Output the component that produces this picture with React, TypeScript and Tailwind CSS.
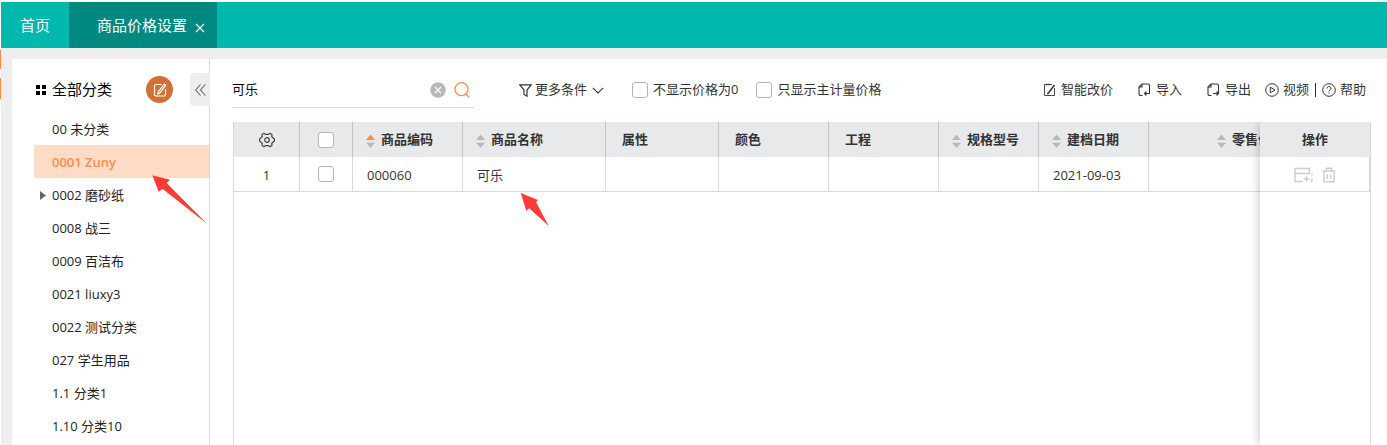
import React, { useState } from 'react';

const categories = [
  { name: '00 未分类' },
  { name: '0001 Zuny' },
  { name: '0002 磨砂纸', hasChildren: true },
  { name: '0008 战三' },
  { name: '0009 百洁布' },
  { name: '0021 liuxy3' },
  { name: '0022 测试分类' },
  { name: '027 学生用品' },
  { name: '1.1 分类1' },
  { name: '1.10 分类10' },
];

const columns = [
  { title: '商品编码', width: 'w-[110px]', sort: 'asc' },
  { title: '商品名称', width: 'w-[143px]', sort: 'none' },
  { title: '属性', width: 'w-[113px]' },
  { title: '颜色', width: 'w-[110px]' },
  { title: '工程', width: 'w-[110px]' },
  { title: '规格型号', width: 'w-[100px]', sort: 'none' },
  { title: '建档日期', width: 'w-[110px]', sort: 'none' },
  { title: '零售价', width: 'w-[135px]', sort: 'none', alignRight: true },
];

const rows = [['000060', '可乐', '', '', '', '', '2021-09-03', '']];

const checkboxClass =
  'block size-4 shrink-0 appearance-none rounded-[3px] border border-[#b4b4b4] bg-white checked:bg-[#ff8c46]';

const SortIcon: React.FC<{ sort?: string }> = ({ sort }) => (
  <svg width="9" height="14" viewBox="0 0 9 14" className="mt-0.5 shrink-0">
    <path d="M4.5 0.5 9 6H0z" fill={sort === 'asc' ? '#ff8c46' : '#b9b9b9'} />
    <path d="M4.5 14 0 8.7h9z" fill="#b9b9b9" />
  </svg>
);

const GearIcon = () => (
  <svg width="16" height="16" viewBox="0 0 16 16" fill="none" stroke="#444" strokeWidth="1.2" strokeLinejoin="round">
    <path d="M5 1.300 6.300 2.400h3.400L11 1.300l2 1.200-.300 2L14.200 6l1.200 1v2l-1.200 1-1.500 1.500.300 2-2 1.200-1.300-1.100H6.300L5 14.700l-2-1.200.300-2L1.800 10 .600 9V7l1.200-1 1.500-1.500-.300-2z" />
    <circle cx="8" cy="8" r="2.300" />
  </svg>
);

const NoteIcon: React.FC<{ size: number }> = ({ size }) => (
  <svg width={size} height={size} viewBox="0 0 14 14" fill="none" stroke="currentColor" strokeWidth="1.2">
    <path d="M8.5 1.5H3a1.5 1.5 0 0 0-1.5 1.5v8.5A1.5 1.5 0 0 0 3 13h8a1.500 1.500 0 0 0 1.500-1.500V6" />
    <path d="m11.300 1.200 1.500 1-6 7.800-2 .9.400-2.100z" />
  </svg>
);

const PriceEditIcon = () => (
  <svg width="13" height="14" viewBox="0 0 13 14" fill="none" stroke="currentColor">
    <path d="M9 1.500H1.500v11h10V5" strokeWidth="0.900" />
    <path d="M11.500 2 5.500 10l-1.300.8" strokeWidth="1.600" />
    <path d="M3.500.500v2M6 .500v2" strokeWidth="0.800" />
  </svg>
);

const TransferIcon: React.FC<{ out?: boolean }> = ({ out }) => (
  <svg width="13" height="14" viewBox="0 0 13 14" fill="none" stroke="currentColor" strokeWidth="1.100">
    <path d="M4.500 12.500H2.500A1.500 1.500 0 0 1 1 11V4l3-3h6a1.500 1.500 0 0 1 1.500 1.500V11" />
    <path d="M4 1v3H1" />
    {out ? <path d="M6 10.500h5.500M9.500 8.500l2 2-2 2" /> : <path d="M11.500 10.500H6.500M8.500 8.500l-2 2 2 2" />}
  </svg>
);

function App() {
  const [active, setActive] = useState('0001 Zuny');
  const [keyword, setKeyword] = useState('可乐');

  return (
    <div className="relative flex h-screen overflow-hidden bg-white pt-0.5 font-['Open_Sans','Noto_Sans_CJK_SC',sans-serif] text-[13px] text-[#333]">
      <div className="flex w-px shrink-0 flex-col pt-12">
        <span className="h-[19px] bg-[#ff8c46]" />
        <span className="mt-[9px] h-[21px] bg-[#ff8c46]" />
      </div>

      <div className="flex min-w-0 flex-1 flex-col bg-[#eee]">
        <header className="flex h-[46px] shrink-0 bg-[#00b8ad] pt-px text-[15px] text-white">
          <a href="#home" className="flex w-[68px] items-center justify-center">首页</a>
          <div className="-mt-px flex w-[148px] items-center bg-[#008980] pl-7 pt-px">
            <a href="#price">商品价格设置</a>
            <button aria-label="关闭" className="ml-2 mt-1">
              <svg width="10" height="10" viewBox="0 0 10 10" stroke="#fff" strokeWidth="1.1">
                <path d="m1 1 8 8M9 1 1 9" />
              </svg>
            </button>
          </div>
        </header>

        <div className="ml-[11px] mt-[11px] flex min-h-0 flex-1 bg-white">
          <aside className="flex w-[198px] shrink-0 flex-col border-r border-[#d9d9d9]">
            <div className="flex h-[53px] shrink-0 items-center pl-6 pt-2 text-black">
              <svg width="10" height="10" viewBox="0 0 10 10">
                <path d="M0 0h4v4H0zM6 0h4v4H6zM0 6h4v4H0zM6 6h4v4H6z" />
              </svg>
              <h2 className="ml-1.5 text-[15px]">全部分类</h2>
              <button
                aria-label="编辑分类"
                className="ml-auto flex size-[27px] items-center justify-center rounded-full bg-[#cf7233] text-white"
              >
                <NoteIcon size={14} />
              </button>
              <button
                aria-label="收起"
                className="-mr-px ml-[17px] flex h-[33px] w-5 items-center justify-center rounded-l bg-[#eee]"
              >
                <svg width="11" height="12" viewBox="0 0 11 12" fill="none" stroke="#666" strokeWidth="1.1">
                  <path d="M5.500.500.700 6l4.800 5.500M10.300.500 5.500 6l4.800 5.500" />
                </svg>
              </button>
            </div>
            <ul className="pl-[22px]">
              {categories.map((item) => (
                <li key={item.name}>
                  <button
                    onClick={() => setActive(item.name)}
                    className={`flex h-[33px] w-full items-center pt-0.5 ${
                      active === item.name ? 'bg-[#ffdcc6] font-semibold text-[#ff8c46]' : 'text-[#222]'
                    }`}
                  >
                    <span className="flex w-[18px] justify-center">
                      {item.hasChildren && (
                        <svg width="6" height="9" viewBox="0 0 6 9">
                          <path d="M0 0l6 4.500L0 9z" fill="#666" />
                        </svg>
                      )}
                    </span>
                    {item.name}
                  </button>
                </li>
              ))}
            </ul>
          </aside>

          <main className="flex min-w-0 flex-1 flex-col pl-[22px] pr-4">
            <div className="flex h-[63px] shrink-0 items-start whitespace-nowrap pr-[5px] pt-3.5">
              <div className="flex h-[35px] w-[242px] shrink-0 items-center border-b border-[#d9d9d9] pr-1">
                <input
                  aria-label="搜索商品"
                  value={keyword}
                  onChange={(e) => setKeyword(e.target.value)}
                  className="min-w-0 flex-1 text-black outline-none"
                />
                <button aria-label="清空" onClick={() => setKeyword('')}>
                  <svg width="16" height="16" viewBox="0 0 16 16">
                    <circle cx="8" cy="8" r="7.700" fill="#b8b8b8" />
                    <path d="m5 5 6 6M11 5l-6 6" stroke="#fff" strokeWidth="1.200" />
                  </svg>
                </button>
                <button aria-label="搜索" className="ml-2">
                  <svg width="16" height="16" viewBox="0 0 16 16" fill="none" stroke="#ff8c46" strokeWidth="1.300">
                    <circle cx="7.500" cy="7.200" r="6.500" />
                    <path d="m11.800 12 3.400 3.400" />
                  </svg>
                </button>
              </div>

              <div className="ml-[45px] flex h-[34px] items-center">
                <button className="flex items-center">
                  <svg width="13" height="13" viewBox="0 0 13 13" fill="none" stroke="#333" strokeWidth="1.200">
                    <path d="M.800.800h11.400L8 6v6.200L5 10.500V6z" />
                  </svg>
                  <span className="ml-[3px]">更多条件</span>
                  <svg width="12" height="7" viewBox="0 0 12 7" fill="none" stroke="#333" strokeWidth="1.100" className="ml-[5px]">
                    <path d="m.800.800 5.200 5.200L11.200.800" />
                  </svg>
                </button>
                <label className="ml-7 flex items-center gap-[5px]">
                  <input type="checkbox" className={checkboxClass} />
                  不显示价格为0
                </label>
                <label className="ml-[18px] flex items-center gap-[5px]">
                  <input type="checkbox" className={checkboxClass} />
                  只显示主计量价格
                </label>
              </div>

              <div className="ml-auto flex h-[34px] items-center">
                <button className="flex items-center gap-[5px]">
                  <PriceEditIcon />
                  智能改价
                </button>
                <button className="ml-[25px] flex items-center gap-[5px]">
                  <TransferIcon />
                  导入
                </button>
                <button className="ml-[25px] flex items-center gap-[5px]">
                  <TransferIcon out />
                  导出
                </button>
                <button className="ml-3.5 flex items-center gap-1">
                  <svg width="14" height="14" viewBox="0 0 14 14" fill="none" stroke="currentColor">
                    <circle cx="7" cy="7" r="6.300" />
                    <path d="M5.300 4.200v5.600L10 7z" />
                  </svg>
                  视频
                </button>
                <span className="ml-1.5 h-3.5 w-px bg-[#333]" />
                <button className="ml-1.5 flex items-center gap-1">
                  <svg width="14" height="14" viewBox="0 0 14 14" fill="none" stroke="currentColor">
                    <circle cx="7" cy="7" r="6.300" />
                    <path d="M5 5.600a2 2 0 1 1 3 1.600c-.700.400-1 .700-1 1.300M7 9.500v1.100" />
                  </svg>
                  帮助
                </button>
              </div>
            </div>

            <div className="ml-px flex min-h-0 flex-1 border-x border-[#d9d9d9]">
              <div className="min-w-0 flex-1 overflow-hidden">
                <table className="w-[1050px] table-fixed border-separate border-spacing-0">
                  <thead>
                    <tr className="h-[35px] bg-[#e7e9eb]">
                      <th className="w-[66px] border-r border-[#c4c4c4]">
                        <button aria-label="列设置" className="flex w-full justify-center">
                          <GearIcon />
                        </button>
                      </th>
                      <th className="w-[53px] border-r border-[#c4c4c4]">
                        <input type="checkbox" aria-label="全选" className={`${checkboxClass} mx-auto`} />
                      </th>
                      {columns.map((col) => (
                        <th key={col.title} className={`${col.width} border-r border-[#c4c4c4] pl-[13px] pr-3`}>
                          <div className={`flex items-center gap-1.5 whitespace-nowrap ${col.alignRight ? 'justify-end' : ''} ${col.sort ? '' : 'pl-[3px]'}`}>
                            {col.sort && <SortIcon sort={col.sort} />}
                            {col.title}
                          </div>
                        </th>
                      ))}
                    </tr>
                  </thead>
                  <tbody>
                    {rows.map((row, i) => (
                      <tr key={i} className="h-[35px]">
                        <td className="border-b border-r border-[#d9d9d9] pt-1 text-center">{i + 1}</td>
                        <td className="border-b border-r border-[#d9d9d9]">
                          <input type="checkbox" aria-label="选择" className={`${checkboxClass} mx-auto`} />
                        </td>
                        {row.map((cell, j) => (
                          <td key={j} className="border-b border-r border-[#d9d9d9] pl-3.5 pt-1">{cell}</td>
                        ))}
                      </tr>
                    ))}
                  </tbody>
                </table>
              </div>

              {/* fixed action column */}
              <div className="relative w-[110px] shrink-0 bg-white shadow-[0_0_10px_rgba(0,0,0,0.25)] [clip-path:inset(0_0_0_-12px)]">
                <table className="w-full border-separate border-spacing-0">
                  <thead>
                    <tr className="h-[35px] bg-[#e7e9eb]">
                      <th>操作</th>
                    </tr>
                  </thead>
                  <tbody>
                    <tr className="h-[35px]">
                      <td className="border-b border-r border-[#d9d9d9] pt-0.5">
                        <div className="flex items-center justify-center gap-2 text-[#ccc]">
                          <button aria-label="添加行">
                            <svg width="20" height="16" viewBox="0 0 20 16" fill="none" stroke="currentColor" strokeWidth="1.400">
                              <path d="M9 14.500H1V1.500h14.500v6M1 6.500h14.500M12.500 9v6M9.500 12h6" />
                              <path d="M18 6.500v2M18 11.500v1.500l-1 1.500" />
                            </svg>
                          </button>
                          <button aria-label="删除">
                            <svg width="14" height="16" viewBox="0 0 14 16" fill="none" stroke="currentColor" strokeWidth="1.400">
                              <path d="M.500 4h13M4.500 4V1.200h5V4M2 4v10.800h10V4M5.300 7.500v4.500M8.700 7.500v4.500" />
                            </svg>
                          </button>
                        </div>
                      </td>
                    </tr>
                  </tbody>
                </table>
              </div>
            </div>
          </main>
        </div>
      </div>

      <svg className="pointer-events-none absolute left-[152px] top-[175px]" width="56" height="50" viewBox="0 0 56 50">
        <path d="M.300.200 18 4.700 14.600 8 55 48.800 10.400 13.700 6.800 17z" fill="#ff3b37" />
      </svg>
      <svg className="pointer-events-none absolute left-[520px] top-[193px]" width="30" height="34" viewBox="0 0 30 34">
        <path d="M.700 0 18 7l-2 2 12.700 24L9.300 15.300 6.300 17.700z" fill="#ff3b37" />
      </svg>
    </div>
  );
}

export default App;
